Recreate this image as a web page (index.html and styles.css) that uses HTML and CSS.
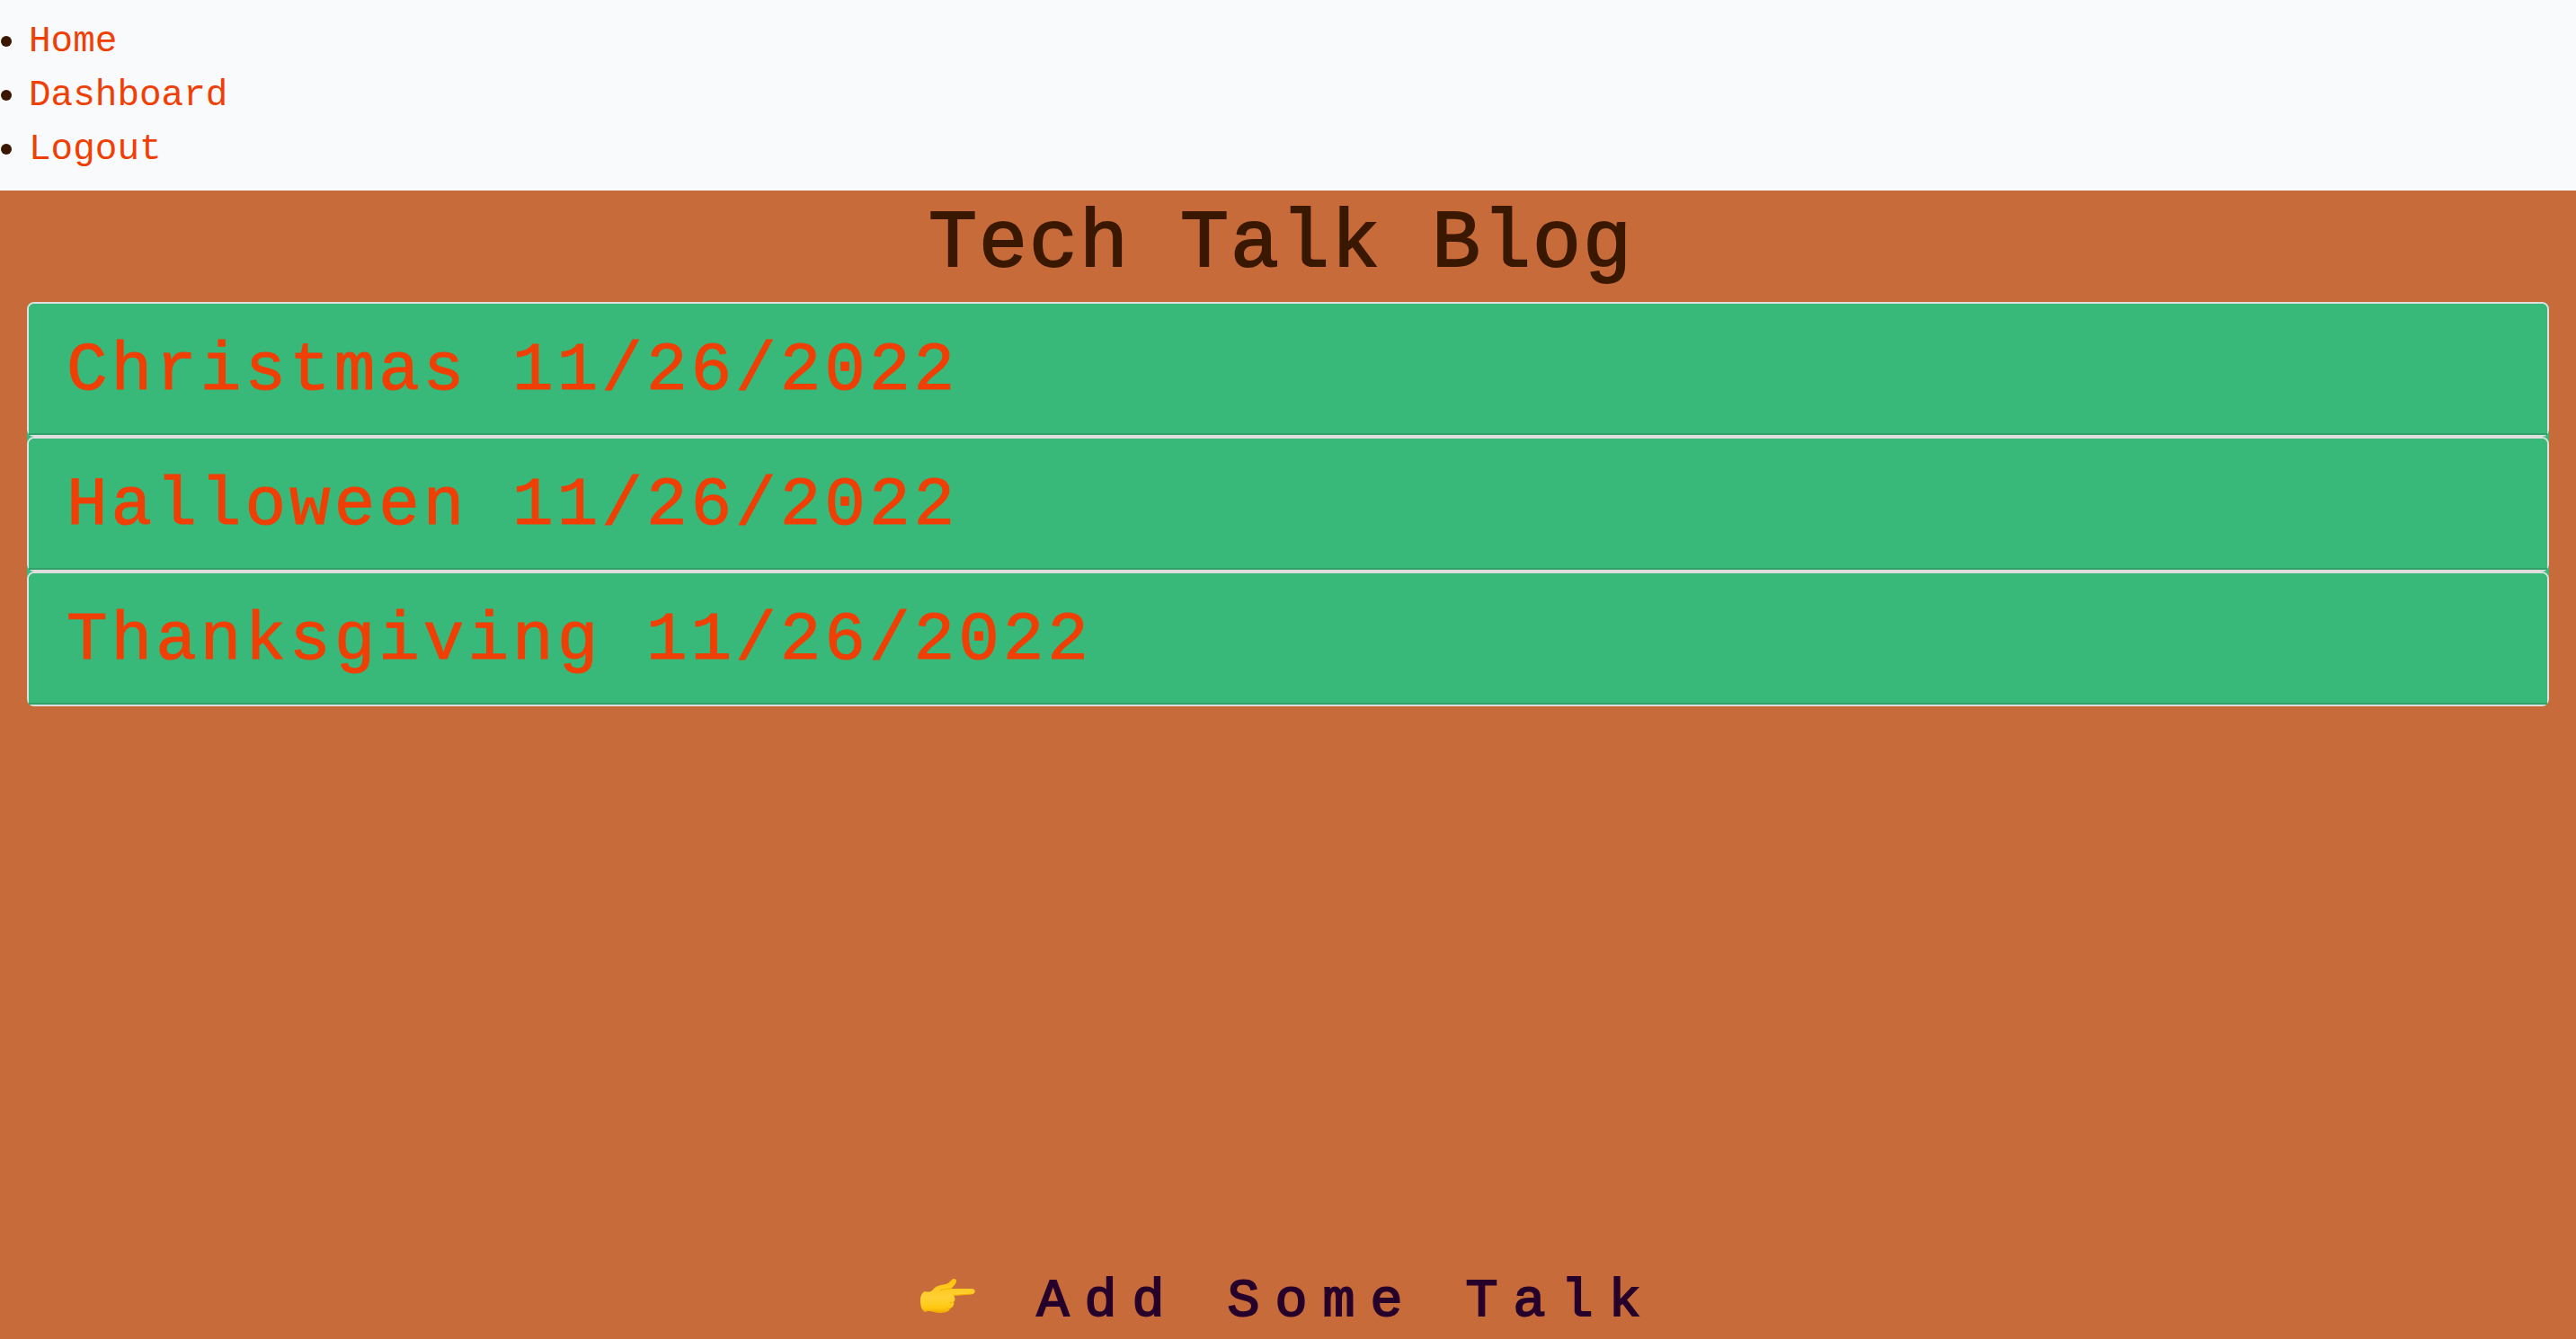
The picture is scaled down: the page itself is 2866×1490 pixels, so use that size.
FILE: index.html
```html
<!DOCTYPE html>
<html lang="en">
<head>
<meta charset="utf-8">
<meta name="viewport" content="width=device-width, initial-scale=1">
<title>Tech Talk Blog</title>
<link rel="stylesheet" href="styles.css">
</head>
<body>
<nav class="navbar">
  <ul class="nav-list">
    <li class="nav-item"><a href="#">Home</a></li>
    <li class="nav-item"><a href="#">Dashboard</a></li>
    <li class="nav-item"><a href="#">Logout</a></li>
  </ul>
</nav>
<main class="content">
  <h1 class="title">Tech Talk Blog</h1>
  <ul class="posts">
    <li class="post"><a class="post-link" href="#">Christmas 11/26/2022</a></li>
    <li class="post"><a class="post-link" href="#">Halloween 11/26/2022</a></li>
    <li class="post"><a class="post-link" href="#">Thanksgiving 11/26/2022</a></li>
  </ul>
</main>
<footer class="footer">
  <button class="add-button" type="button">
    <svg class="hand" viewBox="0 0 64 40" aria-hidden="true">
      <defs>
        <linearGradient id="skin" x1="0" y1="0" x2="0" y2="1">
          <stop offset="0" stop-color="#ffc30a"/>
          <stop offset="0.55" stop-color="#ffd136"/>
          <stop offset="0.85" stop-color="#ffc810"/>
          <stop offset="1" stop-color="#eea503"/>
        </linearGradient>
      </defs>
      <path fill="url(#skin)" d="M6 15C9 16 13 16 15 13C18 9 23 8 29 7C34 6 35 1 38.500 1C42 1 41.500 5 39 8C37 10 36 11 35 12H58C63 12 63 18 58 18L38 19.500C40 22 40 25 38 27C39 30 37 33 34 34C33 38 28 39 22 39C16 39 12 35 6 38C2 36 1 30 1 25C1 20 3 16 6 15Z"/>
      <path fill="none" stroke="#f5b000" stroke-width="1" stroke-linecap="round" d="M35 12C30 12 26 13 23 14M58 18L38 19.500M38 27C36 28 35 28 34 27M34 34C33 35 31 34 30 33"/>
    </svg>
    <span>Add Some Talk</span>
  </button>
</footer>
</body>
</html>
```
FILE: styles.css
```css
* {
  box-sizing: border-box;
}

body {
  display: flex;
  flex-direction: column;
  min-height: 100vh;
  margin: 0;
  background: #c76b3a;
  color: #3a1800;
  font-family: "Liberation Mono", monospace;
  font-size: 41px;
  line-height: 60px;
}

a {
  color: #f03f05;
  text-decoration: none;
}

.navbar {
  padding: 16px 0;
  background: #f8fafc;
}

.nav-list,
.posts {
  margin: 0;
  padding: 0;
  list-style: none;
}

.nav-item {
  display: flex;
  align-items: center;
  gap: 19px;
  padding-left: 1px;
}

.nav-item::before {
  width: 12px;
  height: 12px;
  border-radius: 50%;
  background: #3a1800;
  content: "";
}

.content {
  flex: 1;
  padding: 0 30px;
}

.title {
  margin: 0;
  padding: 4px 16px 8px 0;
  font-size: 90px;
  font-weight: 400;
  letter-spacing: 2px;
  line-height: 112px;
  text-align: center;
  -webkit-text-stroke: 2px #3a1800;
}

.posts {
  border-radius: 8px;
  background: #38b879;
}

.post {
  border: 2px solid #dfdfdf;
  border-radius: 8px;
}

.post-link {
  display: block;
  padding: 15px 42px 11px;
  border-radius: 6px 6px 0 0;
  background: #38b879;
  box-shadow: inset 0 -2px 0 rgba(0, 0, 0, 0.125);
  font-size: 76px;
  letter-spacing: 4px;
  line-height: 120px;
  -webkit-text-stroke: 1px #f03f05;
}

.footer {
  display: flex;
  justify-content: center;
}

.add-button {
  display: flex;
  align-items: center;
  gap: 66px;
  padding: 0;
  border: 0;
  background: none;
  color: #26002b;
  font-family: inherit;
  font-size: 60px;
  letter-spacing: 17px;
  line-height: 84px;
  -webkit-text-stroke: 2px #26002b;
}

.hand {
  width: 64px;
  height: 40px;
  margin-bottom: 12px;
}
```
